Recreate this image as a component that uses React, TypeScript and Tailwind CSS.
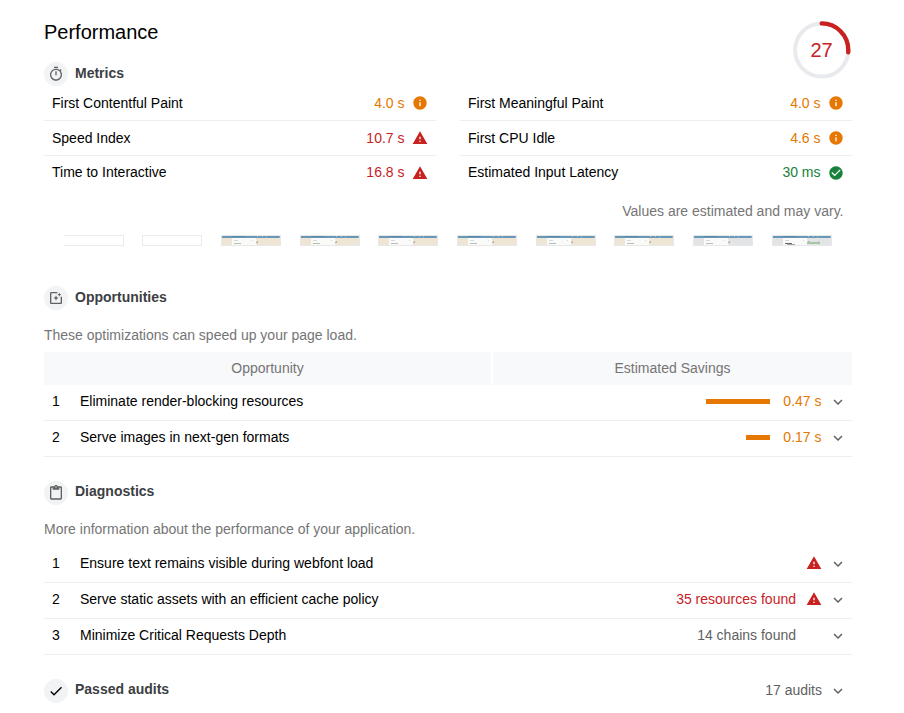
import React from "react";

const PATHS = {
  timer:
    "M15 1H9v2h6V1zm-4 13h2V8h-2v6zm8.03-6.61l1.42-1.42c-.43-.51-.9-.99-1.41-1.41l-1.42 1.42C16.07 4.74 14.12 4 12 4c-4.97 0-9 4.03-9 9s4.02 9 9 9 9-4.03 9-9c0-2.12-.74-4.07-1.97-5.61zM12 20c-3.87 0-7-3.13-7-7s3.13-7 7-7 7 3.13 7 7-3.13 7-7 7z",
  filter:
    "M19.02 10v9H5V5h9V3H5.02c-1.1 0-2 .9-2 2v14c0 1.1.9 2 2 2H19c1.1 0 2-.9 2-2v-9h-1.98zM17 10l.94-2.06L20 7l-2.06-.94L17 4l-.94 2.06L14 7l2.06.94zm-3.75.75L12 8l-1.25 2.75L8 12l2.75 1.25L12 16l1.25-2.75L16 12z",
  clipboard:
    "M19 2h-4.18C14.4.84 13.3 0 12 0c-1.3 0-2.4.84-2.82 2H5c-1.1 0-2 .9-2 2v16c0 1.1.9 2 2 2h14c1.1 0 2-.9 2-2V4c0-1.1-.9-2-2-2zm-7 0c.55 0 1 .45 1 1s-.45 1-1 1-1-.45-1-1 .45-1 1-1zm7 18H5V4h2v3h10V4h2v16z",
  check: "M9 16.17L4.83 12l-1.42 1.41L9 19 21 7l-1.41-1.41z",
  fail: "M1 21h22L12 2 1 21zm12-3h-2v-2h2v2zm0-4h-2v-4h2v4z",
  average:
    "M12 2C6.48 2 2 6.48 2 12s4.48 10 10 10 10-4.48 10-10S17.52 2 12 2zm1 15h-2v-6h2v6zm0-8h-2V7h2v2z",
  pass: "M12 2C6.48 2 2 6.48 2 12s4.48 10 10 10 10-4.48 10-10S17.52 2 12 2zm-2 15l-5-5 1.41-1.41L10 14.17l7.59-7.59L19 8l-9 9z",
  chevron: "M16.59 8.59L12 13.17 7.41 8.59 6 10l6 6 6-6z",
};

type IconName = keyof typeof PATHS;

function Icon({ name, className }: { name: IconName; className: string }) {
  return (
    <svg viewBox="0 0 24 24" fill="currentColor" className={`shrink-0 ${className}`}>
      <path d={PATHS[name]} />
    </svg>
  );
}

function Chevron({ className }: { className: string }) {
  return <Icon name="chevron" className={`mr-[5px] size-[18px] text-[#616161] ${className}`} />;
}

interface SectionTitleProps {
  icon: IconName;
  dark?: boolean;
  low?: boolean;
  children: React.ReactNode;
}

function SectionTitle({ icon, dark, low, children }: SectionTitleProps) {
  return (
    <div className="flex h-6 items-center">
      <span className={`flex size-6 shrink-0 items-center justify-center rounded-full bg-[#f1f3f4] ${low ? "mt-0.5" : ""}`}>
        <Icon name={icon} className={`size-4 ${dark ? "text-black" : "text-[#616161]"}`} />
      </span>
      <h2 className="-mt-0.5 ml-[7px] font-bold text-[#3c4043]">{children}</h2>
    </div>
  );
}

type Rating = "average" | "fail" | "pass";
const TONES: Record<Rating, string> = {
  average: "text-[#e67700]",
  fail: "text-[#c7221f]",
  pass: "text-[#178239]",
};

function Metric({ label, value, rating, last }: { label: string; value: string; rating: Rating; last?: boolean }) {
  const lift = last ? "-mt-0.5" : "";
  return (
    <div className={`flex items-center pr-2 pl-2 ${last ? "h-[34px]" : "h-[35px] border-b border-[#efefef]"}`}>
      <span className={`flex-1 ${lift}`}>{label}</span>
      <span className={`${TONES[rating]} ${lift}`}>{value}</span>
      <Icon name={rating} className={`ml-[7.5px] size-4 ${TONES[rating]}`} />
    </div>
  );
}

function Thumbnail({ kind, first }: { kind: "blank" | "warm" | "grey" | "done"; first?: boolean }) {
  if (kind === "blank")
    return <div className={`h-[11px] w-[60px] border border-[#ebebeb] bg-white ${first ? "border-l-0" : ""}`} />;
  return (
    <svg viewBox="0 0 60 11" className="h-[11px] w-[60px]">
      <rect width="60" height="11" fill="#e8e8e8" />
      <rect x="1" y="1" width="58" height="9" fill={kind === "warm" ? "#eee5d5" : "#e3e4e6"} />
      <rect x="1" y="1" width="58" height="2" fill="#6898b9" />
      <rect x="11" y="1" width="13" height="1" fill="#5a87a5" />
      <path d="M36 1.5h1M41 1.5h1M45 2h1M58 2h1" stroke="#a9c3d3" />
      <rect x="11" y="3" width="24" height="7" fill="#fafbf9" />
      <path d="M13 5.5h4M31 5.5h1" stroke="#d3dcdd" />
      <path d="M13 8.5h7" stroke={kind === "done" ? "#656967" : "#b9bdbd"} />
      {kind === "done" ? (
        <>
          <path d="M15 9.5h8" stroke="#a5a8a6" />
          <rect x="35" y="7" width="13" height="2" fill="#a5c7a7" />
          <path d="M36 6.5h2M46 6.5h1" stroke="#b5bbbd" />
        </>
      ) : (
        <path d="M35 7.5h2M36 6.5h1" stroke="#b8b3aa" />
      )}
    </svg>
  );
}

const FRAMES = ["blank", "blank", "warm", "warm", "warm", "warm", "warm", "warm", "grey", "done"] as const;

function AuditRow({ index, label, children }: { index: number; label: string; children: React.ReactNode }) {
  return (
    <div className="flex h-9 items-center border-b border-[#efefef] pb-1">
      <span className="w-9 pl-2">{index}</span>
      <span className="flex-1">{label}</span>
      {children}
      <Chevron className="mt-[3px]" />
    </div>
  );
}

export default function App() {
  return (
    <main className="h-[713px] w-[904px] overflow-hidden bg-white pr-[52px] pl-11 font-['Liberation_Sans',Arial,sans-serif] text-sm leading-5 text-black">
      <header className="flex h-[86px] justify-between">
        <div>
          <h1 className="mt-[18px] h-11 text-xl leading-7">Performance</h1>
          <SectionTitle icon="timer">Metrics</SectionTitle>
        </div>
        <svg viewBox="0 0 60 60" className="mt-5 size-[60px]">
          <circle cx="29.7" cy="30" r="26.6" fill="none" stroke="#e8eaed" strokeWidth="4" />
          <circle
            cx="29.7"
            cy="30"
            r="26.6"
            fill="none"
            stroke="#c7221f"
            strokeWidth="4.4"
            strokeLinecap="round"
            pathLength="100"
            strokeDasharray="26.4 100"
            transform="rotate(-90 29.7 30)"
          />
          <text x="29.5" y="37" textAnchor="middle" fontSize="20" fill="#c7221f">
            27
          </text>
        </svg>
      </header>

      <div className="grid grid-cols-2 gap-x-6">
        <div>
          <Metric label="First Contentful Paint" value="4.0 s" rating="average" />
          <Metric label="Speed Index" value="10.7 s" rating="fail" />
          <Metric label="Time to Interactive" value="16.8 s" rating="fail" last />
        </div>
        <div>
          <Metric label="First Meaningful Paint" value="4.0 s" rating="average" />
          <Metric label="First CPU Idle" value="4.6 s" rating="average" />
          <Metric label="Estimated Input Latency" value="30 ms" rating="pass" last />
        </div>
      </div>
      <p className="mt-[11px] h-[34px] pr-[8.5px] text-right text-[#757575]">Values are estimated and may vary.</p>

      <div className="flex h-[51px] items-start justify-between pr-[20.2px] pl-[19.6px]">
        {FRAMES.map((kind, i) => (
          <Thumbnail key={i} kind={kind} first={i === 0} />
        ))}
      </div>

      <section className="h-[194px]">
        <SectionTitle icon="filter">Opportunities</SectionTitle>
        <p className="mt-[15px] mb-[7px] text-[#757575]">These optimizations can speed up your page load.</p>
        <div className="flex h-[33px] gap-0.5 text-center leading-[33px] text-[#757575]">
          <div className="w-[447px] bg-[#f8f9fb]">Opportunity</div>
          <div className="flex-1 bg-[#f8f9fb]">Estimated Savings</div>
        </div>
        <AuditRow index={1} label="Eliminate render-blocking resources">
          <span className="mt-0.5 h-[5px] w-16 bg-[#e67700]" />
          <span className="mr-[7.5px] ml-[13px] text-[#e67700]">0.47 s</span>
        </AuditRow>
        <AuditRow index={2} label="Serve images in next-gen formats">
          <span className="mt-0.5 h-[5px] w-6 bg-[#e67700]" />
          <span className="mr-[7.5px] ml-[13px] text-[#e67700]">0.17 s</span>
        </AuditRow>
      </section>

      <section className="h-[198px]">
        <SectionTitle icon="clipboard" low>Diagnostics</SectionTitle>
        <p className="mt-[15px] mb-2 text-[#757575]">More information about the performance of your application.</p>
        <AuditRow index={1} label="Ensure text remains visible during webfont load">
          <Icon name="fail" className="mr-[7px] size-4 text-[#c7221f]" />
        </AuditRow>
        <AuditRow index={2} label="Serve static assets with an efficient cache policy">
          <span className="text-[#c7221f]">35 resources found</span>
          <Icon name="fail" className="mr-[7px] ml-[10px] size-4 text-[#c7221f]" />
        </AuditRow>
        <AuditRow index={3} label="Minimize Critical Requests Depth">
          <span className="mr-[33px] text-[#616161]">14 chains found</span>
        </AuditRow>
      </section>

      <div className="flex items-center justify-between">
        <SectionTitle icon="check" dark low>Passed audits</SectionTitle>
        <div className="flex items-center text-[#616161]">
          <span className="mr-[7px]">17 audits</span>
          <Chevron className="mt-px" />
        </div>
      </div>
    </main>
  );
}
